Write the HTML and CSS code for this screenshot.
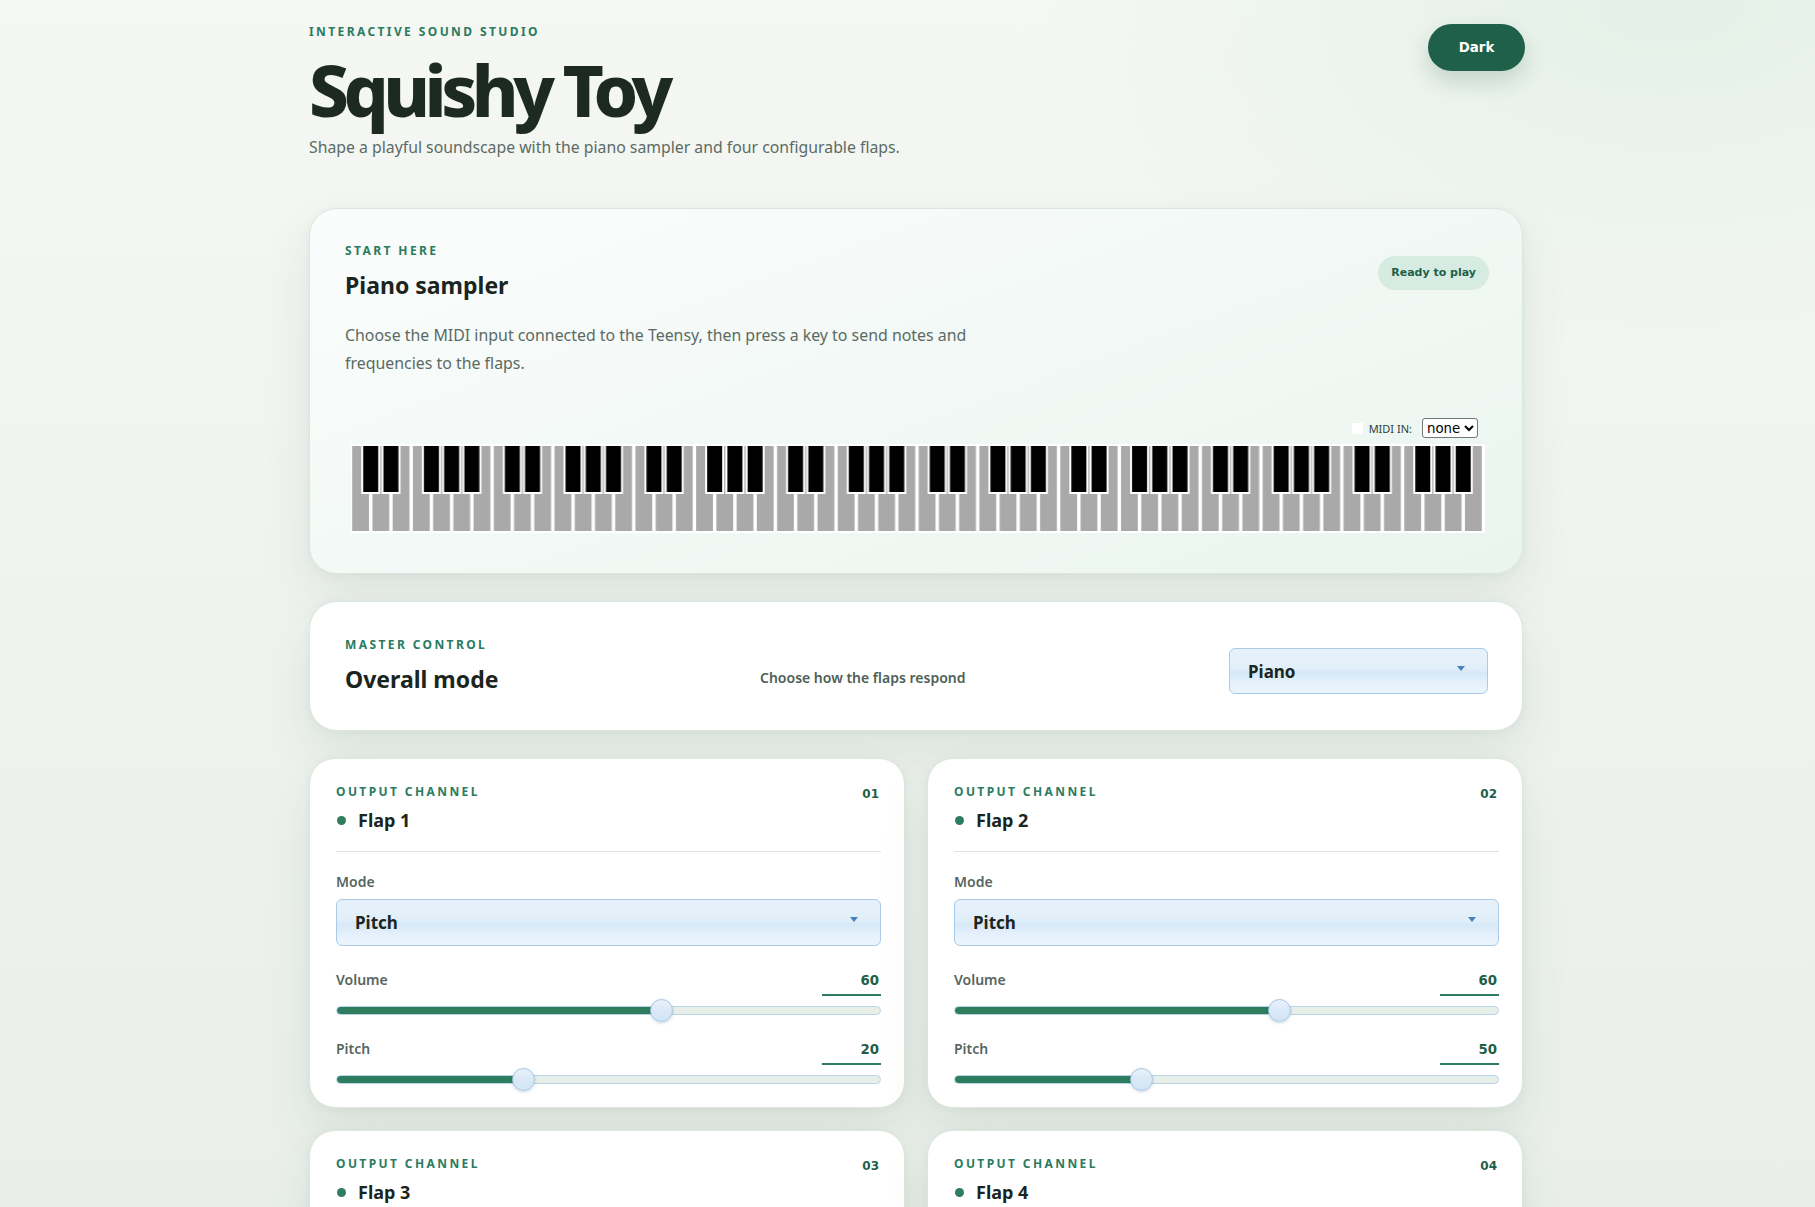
FILE: index.html
```html
<!DOCTYPE html>
<html lang="en">
<head>
<meta charset="utf-8">
<title>Squishy Toy</title>
<link rel="stylesheet" href="styles.css">
</head>
<body>
<div class="page">
  <header class="top">
    <div class="top-text">
      <p class="eyebrow">Interactive sound studio</p>
      <h1 class="title">Squishy Toy</h1>
      <p class="subtitle">Shape a playful soundscape with the piano sampler and four configurable flaps.</p>
    </div>
    <button class="theme-btn" type="button">Dark</button>
  </header>

  <main class="stack">
    <section class="card sampler">
      <div class="sampler-head">
        <div>
          <p class="eyebrow">Start here</p>
          <h2 class="card-title">Piano sampler</h2>
        </div>
        <span class="badge">Ready to play</span>
      </div>
      <p class="lead">Choose the MIDI input connected to the Teensy, then press a key to send notes and frequencies to the flaps.</p>
      <div class="piano">
        <div class="midi-row">
          <span class="midi-check"></span>
          <span class="midi-label">MIDI IN:</span>
          <select class="midi-select"><option>none</option></select>
        </div>
        <svg class="keys" width="1134" height="89" viewBox="0 0 1134 89">
          <defs>
            <pattern id="octave" patternUnits="userSpaceOnUse" x="0" y="0" width="141.625" height="89">
              <rect x="1.2" y="2" width="16.8" height="85" fill="#a9a9a9"/>
              <rect x="21.43" y="2" width="16.8" height="85" fill="#a9a9a9"/>
              <rect x="41.66" y="2" width="16.8" height="85" fill="#a9a9a9"/>
              <rect x="61.9" y="2" width="16.8" height="85" fill="#a9a9a9"/>
              <rect x="82.13" y="2" width="16.8" height="85" fill="#a9a9a9"/>
              <rect x="102.36" y="2" width="16.8" height="85" fill="#a9a9a9"/>
              <rect x="122.59" y="2" width="16.8" height="85" fill="#a9a9a9"/>
              <rect x="10.23" y="0" width="19" height="50" fill="#fff"/>
              <rect x="30.46" y="0" width="19" height="50" fill="#fff"/>
              <rect x="70.93" y="0" width="19" height="50" fill="#fff"/>
              <rect x="91.16" y="0" width="19" height="50" fill="#fff"/>
              <rect x="111.39" y="0" width="19" height="50" fill="#fff"/>
              <rect x="12.23" y="2" width="15" height="46" fill="#000"/>
              <rect x="32.46" y="2" width="15" height="46" fill="#000"/>
              <rect x="72.93" y="2" width="15" height="46" fill="#000"/>
              <rect x="93.16" y="2" width="15" height="46" fill="#000"/>
              <rect x="113.39" y="2" width="15" height="46" fill="#000"/>
            </pattern>
          </defs>
          <rect x="0" y="0" width="1134" height="89" fill="#fff"/>
          <rect x="0" y="0" width="1133" height="89" fill="url(#octave)"/>
        </svg>
      </div>
    </section>

    <section class="card master">
      <div>
        <p class="eyebrow">Master control</p>
        <h2 class="card-title">Overall mode</h2>
      </div>
      <p class="master-hint">Choose how the flaps respond</p>
      <div class="select-box">
        <select class="fancy-select"><option>Piano</option></select>
      </div>
    </section>

    <div class="flaps">
      <section class="card flap">
        <div class="flap-head">
          <div class="flap-top"><p class="eyebrow">Output channel</p><span class="channel">01</span></div>
          <div class="flap-name"><span class="dot"></span><h3>Flap 1</h3></div>
        </div>
        <label class="field-label">Mode</label>
        <div class="select-box"><select class="fancy-select"><option>Pitch</option></select></div>
        <div class="field first">
          <div class="field-row"><span class="field-label">Volume</span><input class="value" type="text" value="60"></div>
          <div class="slider" style="--v:59.7%"><div class="track"></div><span class="thumb"></span></div>
        </div>
        <div class="field">
          <div class="field-row"><span class="field-label">Pitch</span><input class="value" type="text" value="20"></div>
          <div class="slider" style="--v:34.4%"><div class="track"></div><span class="thumb"></span></div>
        </div>
      </section>

      <section class="card flap">
        <div class="flap-head">
          <div class="flap-top"><p class="eyebrow">Output channel</p><span class="channel">02</span></div>
          <div class="flap-name"><span class="dot"></span><h3>Flap 2</h3></div>
        </div>
        <label class="field-label">Mode</label>
        <div class="select-box"><select class="fancy-select"><option>Pitch</option></select></div>
        <div class="field first">
          <div class="field-row"><span class="field-label">Volume</span><input class="value" type="text" value="60"></div>
          <div class="slider" style="--v:59.7%"><div class="track"></div><span class="thumb"></span></div>
        </div>
        <div class="field">
          <div class="field-row"><span class="field-label">Pitch</span><input class="value" type="text" value="50"></div>
          <div class="slider" style="--v:34.4%"><div class="track"></div><span class="thumb"></span></div>
        </div>
      </section>

      <section class="card flap">
        <div class="flap-head">
          <div class="flap-top"><p class="eyebrow">Output channel</p><span class="channel">03</span></div>
          <div class="flap-name"><span class="dot"></span><h3>Flap 3</h3></div>
        </div>
        <label class="field-label">Mode</label>
        <div class="select-box"><select class="fancy-select"><option>Pitch</option></select></div>
        <div class="field first">
          <div class="field-row"><span class="field-label">Volume</span><input class="value" type="text" value="60"></div>
          <div class="slider" style="--v:59.7%"><div class="track"></div><span class="thumb"></span></div>
        </div>
        <div class="field">
          <div class="field-row"><span class="field-label">Pitch</span><input class="value" type="text" value="20"></div>
          <div class="slider" style="--v:34.4%"><div class="track"></div><span class="thumb"></span></div>
        </div>
      </section>

      <section class="card flap">
        <div class="flap-head">
          <div class="flap-top"><p class="eyebrow">Output channel</p><span class="channel">04</span></div>
          <div class="flap-name"><span class="dot"></span><h3>Flap 4</h3></div>
        </div>
        <label class="field-label">Mode</label>
        <div class="select-box"><select class="fancy-select"><option>Pitch</option></select></div>
        <div class="field first">
          <div class="field-row"><span class="field-label">Volume</span><input class="value" type="text" value="60"></div>
          <div class="slider" style="--v:59.7%"><div class="track"></div><span class="thumb"></span></div>
        </div>
        <div class="field">
          <div class="field-row"><span class="field-label">Pitch</span><input class="value" type="text" value="20"></div>
          <div class="slider" style="--v:34.4%"><div class="track"></div><span class="thumb"></span></div>
        </div>
      </section>
    </div>
  </main>
</div>
</body>
</html>
```
FILE: styles.css
```css
* { box-sizing: border-box; }

html { background: #eef2ee; }

body {
  margin: 0;
  font-family: "Noto Sans", "Open Sans", sans-serif;
  color: #1c2822;
  background:
    radial-gradient(ellipse 900px 500px at 92% 0%, rgba(226, 240, 230, 0.9), rgba(226, 240, 230, 0) 70%),
    linear-gradient(180deg, #f5f7f3 0%, #eff3ef 40%, #e6ece6 100%);
  min-height: 100vh;
}

.page {
  width: 1231px;
  margin: 0 auto;
  padding: 24px 0 60px 17px;
}

/* header */
.top {
  display: flex;
  justify-content: space-between;
  align-items: flex-start;
}

.eyebrow {
  margin: 0;
  font-size: 12px;
  line-height: 16px;
  font-weight: 700;
  letter-spacing: 0.2em;
  text-transform: uppercase;
  color: #2a7b5f;
}

.title {
  margin: 13px 0 0;
  font-size: 71px;
  line-height: 74px;
  font-weight: 800;
  letter-spacing: -0.077em;
  color: #1d2a24;
}

.subtitle {
  margin: 8px 0 0;
  font-size: 15.8px;
  line-height: 24px;
  color: #5c6b64;
}

.theme-btn {
  width: 97px;
  height: 47px;
  margin-right: -2px;
  border: 0;
  border-radius: 999px;
  background: #1f604a;
  color: #fff;
  font-family: "DejaVu Sans", sans-serif;
  font-size: 13.33px;
  font-weight: 700;
  box-shadow: 0 10px 22px rgba(25, 70, 50, 0.18);
}

/* layout */
.stack {
  margin-top: 49px;
  display: flex;
  flex-direction: column;
  gap: 27px;
}

.card {
  background: #ffffff;
  border: 1px solid #dbe6df;
  border-radius: 28px;
  box-shadow: 0 24px 50px rgba(40, 80, 60, 0.09), 0 2px 8px rgba(40, 80, 60, 0.05);
}

.card-title {
  margin: 11px 0 0;
  font-size: 23px;
  line-height: 30px;
  font-weight: 700;
  color: #1b2520;
}

/* sampler */
.sampler {
  padding: 34px 33px 40px 35px;
  background: linear-gradient(160deg, #fbfdfc 0%, #f3f9f6 45%, #eaf5ef 100%);
}

.sampler-head {
  display: flex;
  justify-content: space-between;
  align-items: center;
}

.badge {
  height: 34px;
  margin-top: 2px;
  padding: 0 13px;
  display: inline-flex;
  align-items: center;
  border-radius: 999px;
  background: #d6ece2;
  color: #1f5f48;
  font-family: "DejaVu Sans", sans-serif;
  font-size: 11px;
  font-weight: 700;
}

.lead {
  margin: 21px 0 0;
  max-width: 660px;
  font-size: 15.9px;
  line-height: 28px;
  color: #5b6a63;
}

.piano {
  margin-top: 41px;
  padding: 0 4px 0 6px;
}

.midi-row {
  height: 20px;
  display: flex;
  justify-content: flex-end;
  align-items: center;
  padding-right: 7px;
}

.midi-check {
  width: 11px;
  height: 11px;
  background: #fff;
  margin-right: 6px;
}

.midi-label {
  font-size: 11px;
  color: #2f3d37;
  margin-right: 10px;
}

.midi-select {
  height: 20px;
  font-family: "DejaVu Sans", sans-serif;
  font-size: 13.33px;
  color: #000;
  background: #fff;
  border: 1px solid #767676;
  border-radius: 3px;
}

.keys {
  display: block;
  margin-top: 6px;
}

/* master */
.master {
  padding: 35px 34px 36px 35px;
  display: grid;
  grid-template-columns: 391px 1fr 259px;
  column-gap: 24px;
  align-items: end;
}

.master-hint {
  margin: 0;
  padding-bottom: 6px;
  font-size: 14px;
  line-height: 20px;
  font-weight: 600;
  color: #4e5f57;
}

.select-box {
  position: relative;
}

.select-box::after {
  content: "";
  position: absolute;
  top: 18px;
  right: 23px;
  border-left: 4px solid transparent;
  border-right: 4px solid transparent;
  border-top: 5px solid #4582bb;
  pointer-events: none;
}

.fancy-select {
  appearance: none;
  -webkit-appearance: none;
  width: 100%;
  height: 46px;
  padding: 0 40px 0 18px;
  border: 1px solid #a9cbe8;
  border-radius: 6px;
  background: linear-gradient(180deg, #e6f1fb 0%, #e2eff9 42%, #d6e8f7 55%, #e4f0fb 75%, #ecf5fd 100%);
  font-family: "Noto Sans", sans-serif;
  font-size: 17px;
  font-weight: 700;
  color: #1b2621;
}

/* flaps */
.flaps {
  display: grid;
  grid-template-columns: 1fr 1fr;
  gap: 22px;
}

.flap {
  padding: 25px 23px 16px 26px;
  border-radius: 26px;
}

.flap-head {
  padding-bottom: 19px;
  border-bottom: 1px solid #dbe6e1;
}

.flap-top {
  display: flex;
  justify-content: space-between;
  align-items: flex-start;
  height: 16px;
}

.channel {
  font-family: "DejaVu Sans", sans-serif;
  font-size: 12px;
  line-height: 14px;
  font-weight: 700;
  color: #1f5f48;
  margin-top: 3px;
  padding-right: 2px;
}

.flap-name {
  margin-top: 8px;
  display: flex;
  align-items: center;
  gap: 12px;
}

.dot {
  width: 9px;
  height: 9px;
  border-radius: 50%;
  background: #2e7d5f;
  margin-left: 1px;
}

.flap-name h3 {
  margin: 0;
  font-size: 18px;
  line-height: 24px;
  font-weight: 700;
  color: #1b2520;
}

.field-label {
  display: block;
  font-size: 14px;
  line-height: 20px;
  font-weight: 600;
  color: #56665f;
}

.flap > .field-label {
  margin-top: 20px;
}

.flap .select-box {
  margin-top: 7px;
}

.flap .fancy-select {
  height: 47px;
}

.field {
  margin-top: 17px;
}

.field.first {
  margin-top: 24px;
}

.field-row {
  display: flex;
  justify-content: space-between;
  align-items: flex-start;
}

.value {
  width: 59px;
  height: 26px;
  padding: 0 2px 4px 0;
  border: 0;
  border-bottom: 2px solid #2e7d5f;
  background: transparent;
  text-align: right;
  font-family: "DejaVu Sans", sans-serif;
  font-size: 13.33px;
  font-weight: 700;
  color: #1f5f48;
  outline: none;
}

.slider {
  position: relative;
  height: 23px;
  margin-top: 3px;
}

.track {
  position: relative;
  top: 7px;
  height: 9px;
  border: 1px solid #b9d4ea;
  border-radius: 999px;
  background: linear-gradient(90deg, #2e7d5f 0, #2e7d5f var(--v), #e8eee8 var(--v), #e8eee8 100%);
}

.thumb {
  position: absolute;
  top: 0;
  left: calc(var(--v) - 11.5px);
  width: 23px;
  height: 23px;
  border-radius: 50%;
  border: 1px solid #a4c5e3;
  background: linear-gradient(180deg, #e7f1fa 0%, #dbe9f7 50%, #d2e5f5 100%);
  box-shadow: 0 1px 3px rgba(40, 80, 120, 0.22);
}
```
